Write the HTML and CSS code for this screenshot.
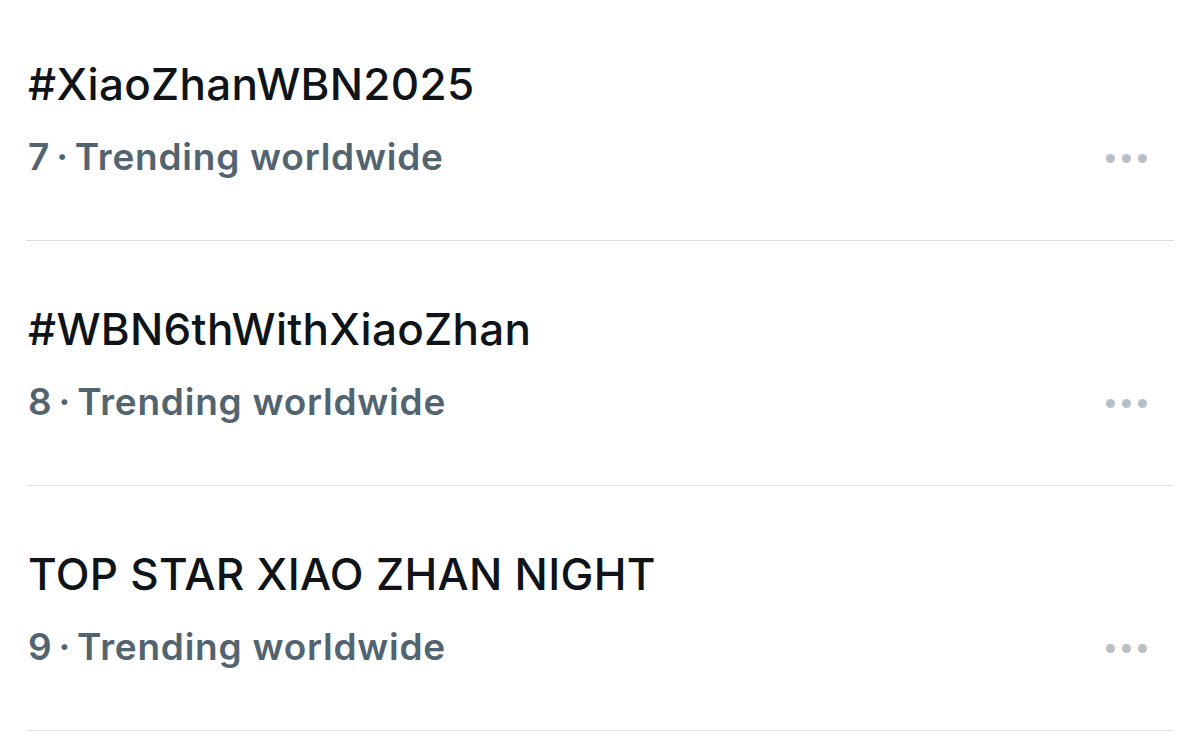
FILE: index.html
```html
<!DOCTYPE html>
<html>

<head>
    <meta charset="utf-8">
    <meta name="viewport" content="width=device-width, initial-scale=1.0">
    <title>Trends</title>
    <link rel="stylesheet" href="styles.css">
</head>

<body>
    <div class="trends">
        <div class="trend">
            <div class="trend-name">#XiaoZhanWBN2025</div>
            <div class="trend-meta">
                <span><span class="rank">7 · </span>Trending worldwide</span>
                <span class="more"><i></i><i></i><i></i></span>
            </div>
        </div>
        <div class="trend">
            <div class="trend-name">#WBN6thWithXiaoZhan</div>
            <div class="trend-meta">
                <span><span class="rank">8 · </span>Trending worldwide</span>
                <span class="more"><i></i><i></i><i></i></span>
            </div>
        </div>
        <div class="trend">
            <div class="trend-name">TOP STAR XIAO ZHAN NIGHT</div>
            <div class="trend-meta">
                <span><span class="rank">9 · </span>Trending worldwide</span>
                <span class="more"><i></i><i></i><i></i></span>
            </div>
        </div>
    </div>
</body>

</html>
```

FILE: styles.css
```css
html, body {
    font-family: Inter, "Noto Sans", sans-serif;
    background: #ffffff;
}

body {
    margin: 0;
    padding: 0;
}

.trends {
    margin: 0 26px;
}

.trend {
    padding: 62px 0 61px 0;
    border-bottom: 1px solid #dadde1;
}

.trend:first-child {
    padding-top: 58px;
}

.trend-name {
    font-size: 44px;
    line-height: 52px;
    font-weight: 500;
    letter-spacing: 0.3px;
    color: #0f1419;
    padding-left: 2px;
}

.trend-meta {
    display: flex;
    justify-content: space-between;
    align-items: center;
    margin-top: 25px;
    font-size: 37px;
    line-height: 44px;
    font-weight: 600;
    letter-spacing: 0.75px;
    color: #536471;
    padding-left: 2px;
}

/* tighter spaces around the middle dot */
.rank {
    word-spacing: -4px;
}

.more {
    display: flex;
    gap: 7px;
    margin-right: 27px;
    margin-top: 3px;
}

.more i {
    width: 9px;
    height: 9px;
    border-radius: 50%;
    background: #b4bfc8;
}
```
